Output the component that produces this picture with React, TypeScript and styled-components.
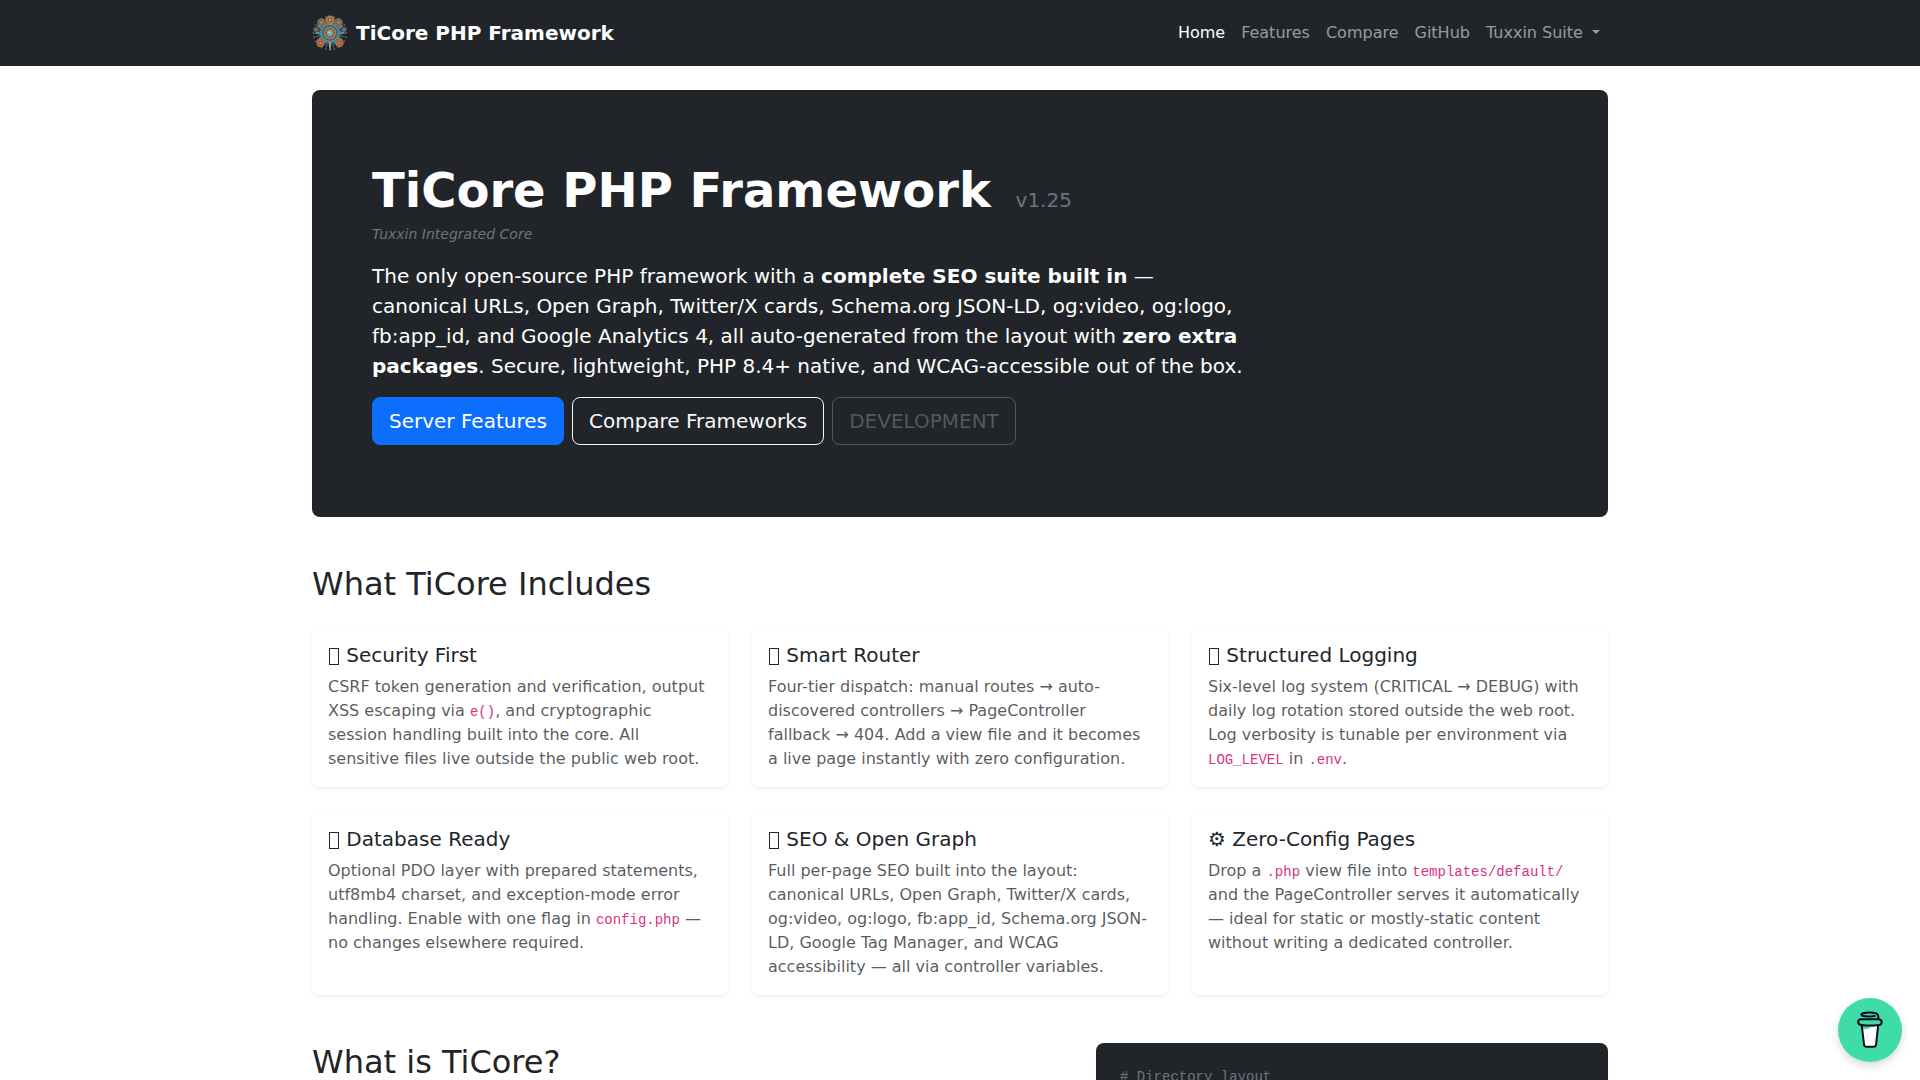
import React from "react";
import styled, { createGlobalStyle } from "styled-components";

const GlobalStyle = createGlobalStyle`
  *, *::before, *::after { box-sizing: border-box; }
  body {
    margin: 0;
    background: #fff;
    color: #212529;
    font-family: "DejaVu Sans", sans-serif;
    font-size: 16px;
    line-height: 24px;
  }
  h1, h2, h3, p, ul, pre { margin: 0; padding: 0; font-weight: 400; }
`;

const Container = styled.div`
  width: 100%;
  max-width: 1320px;
  margin: 0 auto;
  padding: 0 12px;
`;

const Navbar = styled.header`
  background: #212529;
`;

const NavInner = styled(Container)`
  display: flex;
  align-items: center;
  justify-content: space-between;
  min-height: 66px;
`;

const Brand = styled.a`
  display: flex;
  align-items: center;
  gap: 8px;
  color: #fff;
  font-size: 20px;
  line-height: 30px;
  font-weight: 700;
  text-decoration: none;
`;

const NavList = styled.ul`
  display: flex;
  list-style: none;
`;

const NavLink = styled.a<{ $active?: boolean }>`
  display: block;
  padding: 8px;
  color: ${(p) => (p.$active ? "#fff" : "rgba(255, 255, 255, 0.55)")};
  text-decoration: none;
`;

const NavToggle = styled.button`
  display: block;
  padding: 8px;
  border: 0;
  background: none;
  color: rgba(255, 255, 255, 0.55);
  font: inherit;
  cursor: pointer;

  &::after {
    content: "";
    display: inline-block;
    margin-left: 4px;
    vertical-align: 4px;
    border-top: 4px solid;
    border-right: 4px solid transparent;
    border-left: 4px solid transparent;
  }
`;

const Main = styled(Container)`
  display: flex;
  flex-direction: column;
  gap: 48px;
  padding-top: 24px;
`;

const Hero = styled.section`
  padding: 72px 60px;
  border-radius: 8px;
  background: #212529;
  color: #fff;
`;

const HeroTitle = styled.h1`
  margin-bottom: 6px;
  font-size: 48px;
  line-height: 56px;
  font-weight: 700;
`;

const Version = styled.span`
  margin-left: 8px;
  color: #6c757d;
  font-size: 20px;
  line-height: 24px;
  font-weight: 400;
`;

const Tagline = styled.p`
  margin-bottom: 16px;
  color: #6c757d;
  font-size: 14px;
  line-height: 21px;
  font-style: italic;
`;

const Lead = styled.p`
  width: 75%;
  margin-bottom: 16px;
  font-size: 20px;
  line-height: 30px;
`;

const Actions = styled.div`
  display: flex;
  flex-wrap: wrap;
  gap: 8px;
`;

const ActionLink = styled.a<{ $primary?: boolean }>`
  padding: 8px 16px;
  border: 1px solid ${(p) => (p.$primary ? "#0d6efd" : "#f8f9fa")};
  border-radius: 8px;
  background: ${(p) => (p.$primary ? "#0d6efd" : "transparent")};
  color: ${(p) => (p.$primary ? "#fff" : "#f8f9fa")};
  font-size: 20px;
  line-height: 30px;
  text-decoration: none;
`;

const StatusButton = styled.button`
  padding: 8px 16px;
  border: 1px solid #6c757d;
  border-radius: 8px;
  background: transparent;
  color: #6c757d;
  font: inherit;
  font-size: 20px;
  line-height: 30px;
  opacity: 0.65;
`;

const SectionTitle = styled.h2`
  font-size: 32px;
  line-height: 38px;
`;

const Features = styled.section`
  display: flex;
  flex-direction: column;
  gap: 24px;
`;

const CardGrid = styled.div`
  display: grid;
  grid-template-columns: repeat(3, minmax(0, 1fr));
  gap: 24px;
`;

const Card = styled.article`
  padding: 16px;
  border-radius: 6px;
  background: #fff;
  box-shadow: 0 2px 4px rgba(0, 0, 0, 0.075);
`;

const CardTitle = styled.h3`
  margin-bottom: 8px;
  font-size: 20px;
  line-height: 24px;
`;

const BoxIcon = styled.span`
  display: inline-block;
  width: 10px;
  height: 17px;
  margin: 0 1px;
  border: 1px solid currentColor;
  vertical-align: -3px;
`;

const CardText = styled.p`
  color: rgba(33, 37, 41, 0.75);
`;

const Code = styled.code`
  color: #d63384;
  font-family: "Liberation Mono", monospace;
  font-size: 14px;
  line-height: 21px;
`;

const About = styled.section`
  display: grid;
  grid-template-columns: minmax(0, 736fr) minmax(0, 512fr);
  gap: 48px;
  align-items: start;
`;

const Listing = styled.pre`
  padding: 24px;
  border-radius: 8px;
  background: #212529;
  color: #6c757d;
  font-family: "Liberation Mono", monospace;
  font-size: 14px;
  line-height: 21px;
`;

const CoffeeButton = styled.button`
  position: fixed;
  right: 18px;
  bottom: 18px;
  display: grid;
  place-items: center;
  width: 64px;
  height: 64px;
  padding: 0;
  border: 0;
  border-radius: 50%;
  background: #40dca5;
  box-shadow: 0 4px 8px rgba(0, 0, 0, 0.15);
  cursor: pointer;
`;

const spokes = Array.from({ length: 24 }, (_, i) => i * 15);
const rays = Array.from({ length: 12 }, (_, i) => i * 30);
const petals = [
  { x: -14, y: -3.5, r: 2.6, c: "#566b70" },
  { x: 14, y: -3.5, r: 2.6, c: "#566b70" },
  { x: -8.5, y: -10.5, r: 4.2, c: "#92704f" },
  { x: 8.5, y: -10.5, r: 4.2, c: "#7d746b" },
  { x: 0, y: -13, r: 4.6, c: "#b97a48" },
  { x: -9.5, y: 10, r: 4.2, c: "#be6a3c" },
  { x: 9.5, y: 10, r: 4.2, c: "#be6a3c" },
];

function Logo() {
  return (
    <svg width="36" height="36" viewBox="-18 -18 36 36" aria-hidden="true">
      {spokes.map((a) => (
        <g key={a} transform={`rotate(${a})`}>
          <path d="M0-9V-15" stroke="#547580" strokeWidth="1" />
          <circle cy="-16.4" r=".7" fill="#7299a5" />
        </g>
      ))}
      {rays.map((a) => (
        <path key={a} transform={`rotate(${a})`} d="M-2.4-6 0-14.5 2.4-6Z" fill="#4b7d8b" stroke="#8fb5bd" strokeWidth=".5" />
      ))}
      {petals.map((p) => (
        <g key={`${p.x},${p.y}`} transform={`translate(${p.x} ${p.y})`}>
          <circle r={p.r} fill={p.c} />
          <circle r={p.r - 0.4} fill="none" stroke="#49646c" strokeWidth=".6" strokeDasharray="1 1.4" />
          <circle r={p.r * 0.5} fill="#5a5048" />
          <circle r={p.r * 0.3} fill="#d9904f" />
        </g>
      ))}
      <circle r="8.2" fill="#35687a" stroke="#8ab0b9" strokeWidth=".8" strokeDasharray="1.2 1" />
      <circle r="6" fill="#cf8142" />
      <circle r="4.2" fill="none" stroke="#563f35" strokeWidth="1" />
      <circle r="2.7" fill="#43b5db" />
      <circle cx="-.6" cy="-.6" r=".9" fill="#a2e6f2" />
      <path d="M0 9V17.5" stroke="#b0d1d8" strokeWidth=".8" />
    </svg>
  );
}

function CoffeeCup() {
  return (
    <svg width="26" height="38" viewBox="0 0 26 38" fill="none" aria-hidden="true">
      <path d="M5.5 17.5c2.2 1.1 4.5.9 6.6-.3 2.4-1.3 4.8-2.4 8.3-2.2l-2 18.7c-.1 1.2-.7 1.7-1.8 1.7H9.5c-1.1 0-1.7-.5-1.8-1.7Z" fill="#fff" />
      <g stroke="#0d0c22" strokeWidth="2" strokeLinecap="round" strokeLinejoin="round">
        <path d="M4.8 14.3 7 33.3c.2 1.6 1 2.4 2.5 2.4h7.1c1.5 0 2.3-.8 2.5-2.4l2-18.7" />
        <path d="M3.5 8.2h18.2c2.2.2 3.1 1.6 3 3.2-.1 1.5-1 2.5-2.7 2.5-5.8.7-12.3.7-18.1 0C2.2 13.7 1.2 12.8 1.2 11.1c0-1.5.8-2.7 2.3-2.9Z" />
        <path d="M21.4 7.8c.1-2.6-.7-4.9-2.2-5.4-4.2-1.1-9-1.1-13.1-.1C4.1 2.8 3.8 4.2 5.6 4.8c2.7.9 7.6.9 12.2.1" />
      </g>
    </svg>
  );
}

const cards: { icon?: string; title: string; body: React.ReactNode }[] = [
  {
    title: "Security First",
    body: (
      <>
        CSRF token generation and verification, output XSS escaping via <Code>e()</Code>, and
        cryptographic session handling built into the core. All sensitive files live outside the
        public web root.
      </>
    ),
  },
  {
    title: "Smart Router",
    body: (
      <>
        Four-tier dispatch: manual routes → auto-discovered controllers → PageController fallback →
        404. Add a view file and it becomes a live page instantly with zero configuration.
      </>
    ),
  },
  {
    title: "Structured Logging",
    body: (
      <>
        Six-level log system (CRITICAL → DEBUG) with daily log rotation stored outside the web root.
        Log verbosity is tunable per environment via <Code>LOG_LEVEL</Code> in <Code>.env</Code>.
      </>
    ),
  },
  {
    title: "Database Ready",
    body: (
      <>
        Optional PDO layer with prepared statements, utf8mb4 charset, and exception-mode error
        handling. Enable with one flag in <Code>config.php</Code> — no changes elsewhere required.
      </>
    ),
  },
  {
    title: "SEO & Open Graph",
    body: (
      <>
        Full per-page SEO built into the layout: canonical URLs, Open Graph, Twitter/X cards,
        og:video, og:logo, fb:app_id, Schema.org JSON-LD, Google Tag Manager, and WCAG accessibility
        — all via controller variables.
      </>
    ),
  },
  {
    icon: "⚙",
    title: "Zero-Config Pages",
    body: (
      <>
        Drop a <Code>.php</Code> view file into <Code>templates/default/</Code> and the
        PageController serves it automatically — ideal for static or mostly-static content without
        writing a dedicated controller.
      </>
    ),
  },
];

export default function App() {
  return (
    <>
      <GlobalStyle />
      <Navbar>
        <NavInner>
          <Brand href="#">
            <Logo />
            TiCore PHP Framework
          </Brand>
          <nav>
            <NavList>
              <li><NavLink href="#" $active aria-current="page">Home</NavLink></li>
              <li><NavLink href="#features">Features</NavLink></li>
              <li><NavLink href="#compare">Compare</NavLink></li>
              <li><NavLink href="#github">GitHub</NavLink></li>
              <li><NavToggle type="button" aria-haspopup="true">Tuxxin Suite{" "}</NavToggle></li>
            </NavList>
          </nav>
        </NavInner>
      </Navbar>
      <Main as="main">
        <Hero>
          <HeroTitle>
            TiCore PHP Framework <Version>v1.25</Version>
          </HeroTitle>
          <Tagline>Tuxxin Integrated Core</Tagline>
          <Lead>
            The only open-source PHP framework with a <strong>complete SEO suite built in</strong> —
            canonical URLs, Open Graph, Twitter/X cards, Schema.org JSON-LD, og:video, og:logo,
            fb:app_id, and Google Analytics 4, all auto-generated from the layout with{" "}
            <strong>zero extra packages</strong>. Secure, lightweight, PHP 8.4+ native, and
            WCAG-accessible out of the box.
          </Lead>
          <Actions>
            <ActionLink href="#features" $primary>Server Features</ActionLink>
            <ActionLink href="#compare">Compare Frameworks</ActionLink>
            <StatusButton type="button" disabled>DEVELOPMENT</StatusButton>
          </Actions>
        </Hero>
        <Features id="features">
          <SectionTitle>What TiCore Includes</SectionTitle>
          <CardGrid>
            {cards.map((card) => (
              <Card key={card.title}>
                <CardTitle>
                  {card.icon ?? <BoxIcon aria-hidden="true" />} {card.title}
                </CardTitle>
                <CardText>{card.body}</CardText>
              </Card>
            ))}
          </CardGrid>
        </Features>
        <About>
          <SectionTitle>What is TiCore?</SectionTitle>
          <Listing># Directory layout</Listing>
        </About>
      </Main>
      <CoffeeButton type="button" aria-label="Buy me a coffee">
        <CoffeeCup />
      </CoffeeButton>
    </>
  );
}
